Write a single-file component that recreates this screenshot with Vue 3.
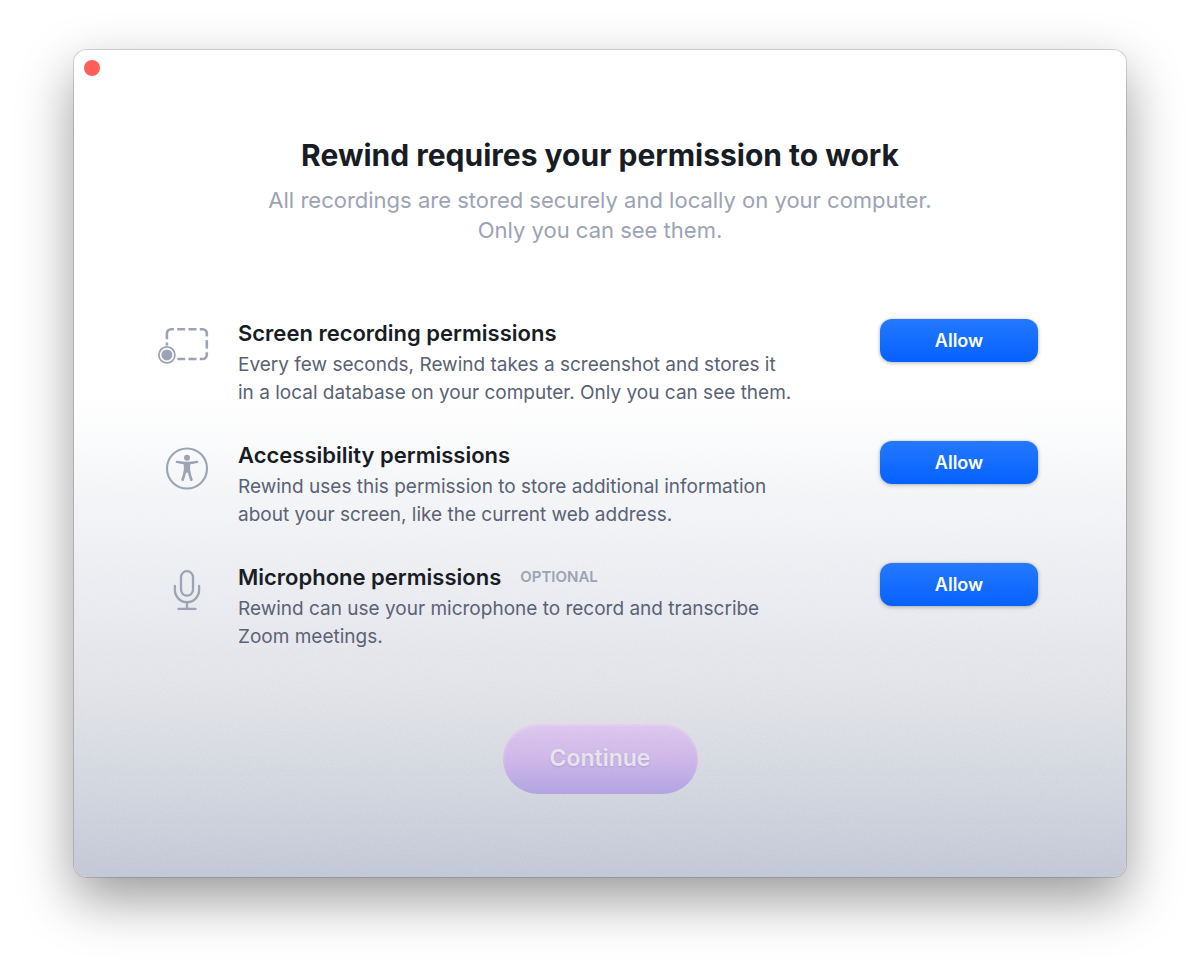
<script setup>
import { reactive } from 'vue'

const permissions = reactive([
  {
    id: 'screen',
    title: 'Screen recording permissions',
    lines: [
      'Every few seconds, Rewind takes a screenshot and stores it',
      'in a local database on your computer. Only you can see them.',
    ],
    optional: false,
    allowed: false,
  },
  {
    id: 'accessibility',
    title: 'Accessibility permissions',
    lines: [
      'Rewind uses this permission to store additional information',
      'about your screen, like the current web address.',
    ],
    optional: false,
    allowed: false,
  },
  {
    id: 'microphone',
    title: 'Microphone permissions',
    lines: [
      'Rewind can use your microphone to record and transcribe',
      'Zoom meetings.',
    ],
    optional: true,
    allowed: false,
  },
])
</script>

<template>
  <div class="desktop">
    <main class="window">
      <svg class="grain" aria-hidden="true">
        <filter id="noise">
          <feTurbulence type="fractalNoise" baseFrequency="0.6" numOctaves="2" />
          <feColorMatrix values="0 0 0 0 0.35  0 0 0 0 0.38  0 0 0 0 0.5  1.6 0 0 0 -0.6" />
        </filter>
        <rect width="100%" height="100%" filter="url(#noise)" />
      </svg>

      <div class="titlebar">
        <button class="close" type="button" aria-label="Close"></button>
      </div>

      <header class="intro">
        <h1>Rewind requires your permission to work</h1>
        <p>All recordings are stored securely and locally on your computer.<br />Only you can see them.</p>
      </header>

      <ul class="list">
        <li v-for="item in permissions" :key="item.id" class="row">
          <svg v-if="item.id === 'screen'" class="icon" viewBox="0 0 58 58" aria-hidden="true">
            <g fill="none" stroke="#9ba3b4" stroke-width="2.6">
              <path d="M12.900 22.300V16.500a4.200 4.200 0 0 1 4.200-4.200h2.800" />
              <path d="M23.200 12.300h8M34.500 12.300h8" />
              <path d="M45.800 12.300h2.800a4.200 4.200 0 0 1 4.200 4.200v3" />
              <path d="M52.800 23.200v8.400" />
              <path d="M52.800 35.200v2.600a4.200 4.200 0 0 1-4.200 4.200h-2.800" />
              <path d="M23.400 42h7.800M34.500 42h8" />
              <path d="M12.900 25.500v3" />
            </g>
            <circle cx="12.900" cy="37.900" r="8" fill="none" stroke="#9ba3b4" stroke-width="1.800" />
            <circle cx="12.900" cy="37.900" r="5.500" fill="#9ba3b4" />
          </svg>

          <svg v-else-if="item.id === 'accessibility'" class="icon" viewBox="0 0 58 58" aria-hidden="true">
            <circle cx="33" cy="29.500" r="20" fill="none" stroke="#9ba3b4" stroke-width="2.100" />
            <circle cx="33" cy="18.700" r="3" fill="#9ba3b4" />
            <g fill="none" stroke="#9ba3b4" stroke-linecap="round" stroke-linejoin="round">
              <path d="M22.900 22.900Q33 25.200 43.100 22.900" stroke-width="2.500" />
              <path d="M31.300 30.500Q31 34 28.600 40.700M34.700 30.500Q35 34 37.400 40.700" stroke-width="2.700" />
            </g>
            <path d="M29.200 23.500h7.600q-.9 3.500-.7 7.500l.3 3.500-3.400-.9-3.400.9.300-3.500q.2-4-.7-7.500z" fill="#9ba3b4" />
          </svg>

          <svg v-else class="icon" viewBox="0 0 58 58" aria-hidden="true">
            <g fill="none" stroke="#9ba3b4" stroke-width="2.300" stroke-linecap="round">
              <rect x="27" y="10.200" width="12" height="24.500" rx="6" />
              <path d="M20.900 24.800v4.300a12.100 12.100 0 0 0 24.200 0v-4.300" />
              <path d="M33 41.200v6.700M24.500 47.900h17" />
            </g>
          </svg>

          <div class="copy">
            <h2>
              {{ item.title }}
              <small v-if="item.optional">OPTIONAL</small>
            </h2>
            <p>{{ item.lines[0] }}<br />{{ item.lines[1] }}</p>
          </div>

          <button
            class="allow"
            type="button"
            :aria-label="'Allow ' + item.title"
            @click="item.allowed = true"
          >
            Allow
          </button>
        </li>
      </ul>

      <footer class="actions">
        <button class="continue" type="button" disabled>Continue</button>
      </footer>
    </main>
  </div>
</template>

<style>
body {
  margin: 0;
  background: #fff;
}
</style>

<style scoped>
.desktop {
  box-sizing: border-box;
  min-height: 100vh;
  padding: 50px 74px 97px;
  display: flex;
  overflow: hidden;
  font-family: Inter, "Liberation Sans", sans-serif;
}

.window {
  position: relative;
  flex: 1;
  display: flex;
  flex-direction: column;
  border-radius: 13px;
  background: linear-gradient(180deg, #fff 0%, #fff 42%, #f5f6f8 53%, #e9eaef 70%, #e0e2e6 80%, #d3d7e0 90%, #c5cad8 100%);
  box-shadow:
    0 0 0 1px rgba(0, 0, 0, 0.14),
    0 22px 54px rgba(0, 0, 0, 0.4);
}

.grain {
  position: absolute;
  inset: 0;
  width: 100%;
  height: 100%;
  border-radius: 13px;
  opacity: 0.14;
  mask-image: linear-gradient(180deg, transparent 45%, #000 100%);
  pointer-events: none;
}

.titlebar {
  display: flex;
  padding: 10px 10px 0;
}

.close {
  width: 16px;
  height: 16px;
  padding: 0;
  border: 0;
  border-radius: 50%;
  background: #ff5f57;
}

.intro {
  margin-top: 59px;
  text-align: center;
}

h1 {
  margin: 0;
  font-size: 30px;
  line-height: 40px;
  font-weight: 700;
  color: #181c25;
}

.intro p {
  margin: 10px 0 0;
  font-size: 22px;
  line-height: 30px;
  color: #9ba3b4;
}

.list {
  list-style: none;
  margin: 72px 0 0;
  padding: 0 88px 0 80px;
  display: flex;
  flex-direction: column;
  gap: 32px;
}

.row {
  display: flex;
  align-items: flex-start;
}

.icon {
  flex: none;
  width: 58px;
  height: 58px;
}

.copy {
  flex: 1;
  margin-left: 26px;
}

h2 {
  display: flex;
  align-items: center;
  gap: 19px;
  margin: 0;
  font-size: 22px;
  line-height: 32px;
  font-weight: 600;
  color: #181c25;
}

small {
  font-size: 15px;
  font-weight: 600;
  color: #9ba3b4;
}

.copy p {
  margin: 2px 0 0;
  font-size: 19px;
  line-height: 28px;
  color: #596275;
}

.allow {
  flex: none;
  width: 158px;
  height: 43px;
  margin-top: 2px;
  padding: 0;
  border: 0;
  border-radius: 12px;
  background: linear-gradient(180deg, #2479ff, #0561ff);
  box-shadow:
    0 0 1px rgba(0, 0, 0, 0.3),
    0 1px 4px rgba(0, 0, 0, 0.28);
  font: 600 18px/43px Inter, "Liberation Sans", sans-serif;
  color: #fff;
}

.actions {
  display: flex;
  justify-content: center;
  margin-top: 73px;
}

.continue {
  width: 195px;
  height: 70px;
  padding: 0 0 2px;
  border: 0;
  border-radius: 35px;
  background: linear-gradient(180deg, #dec9ee 0%, #d0b8e9 50%, #b2a4e2 100%);
  box-shadow: inset 0 2px 3px rgba(240, 215, 245, 0.6);
  font: 600 23px/30px Inter, "Liberation Sans", sans-serif;
  color: #e6e6ee;
  text-shadow: 0 1px 2px rgba(120, 100, 160, 0.3);
}
</style>
